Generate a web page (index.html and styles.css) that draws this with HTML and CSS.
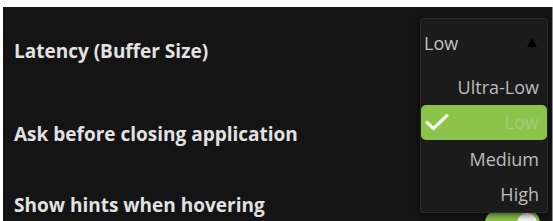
FILE: index.html
```html
<!DOCTYPE html>
<html lang="en">
  <head>
    <meta charset="UTF-8" />
    <meta name="viewport" content="width=device-width, initial-scale=1.0" />
    <title>Settings</title>
    <link rel="stylesheet" href="styles.css">
  </head>
  <body>
    <div class="window">
      <div class="settings">
        <div class="row row-latency">
          <span class="label">Latency (Buffer Size)</span>
        </div>
        <div class="row row-ask">
          <span class="label">Ask before closing application</span>
        </div>
        <div class="row row-hints">
          <span class="label">Show hints when hovering</span>
          <span class="toggle"><span class="knob"></span></span>
        </div>
      </div>

      <!-- open dropdown for latency -->
      <div class="menu">
        <div class="menu-head">
          <span class="current">Low</span>
          <span class="arrow"></span>
        </div>
        <div class="item">Ultra-Low</div>
        <div class="item selected">
          <svg class="check" width="24" height="18" viewBox="0 0 24 18">
            <path d="M2 9.5 L8.5 15.5 L22 2.5" fill="none" stroke="#f2f6ea" stroke-width="3.2" stroke-linecap="round" stroke-linejoin="round" />
          </svg>
          <span>Low</span>
        </div>
        <div class="item">Medium</div>
        <div class="item">High</div>
      </div>
    </div>
  </body>
</html>
```

FILE: styles.css
```css
body {
  margin: 0;
  background: #ffffff;
  font-family: "Open Sans", "DejaVu Sans", sans-serif;
}

.window {
  position: relative;
  margin: 7px 0 0 3px;
  width: 549px;
  height: 214px;
  background: #141414;
  border-right: 1px solid #8a8a8a;
  overflow: hidden;
}

.settings {
  display: flex;
  flex-direction: column;
  padding: 31px 12px 0 11px;
}

.row {
  display: flex;
  justify-content: space-between;
  align-items: flex-start;
}

.row-latency {
  height: 83px;
}

.row-ask {
  height: 71px;
}

.label {
  font-size: 19px;
  line-height: 26px;
  font-weight: 700;
  color: #e2e2e2;
}

.toggle {
  display: flex;
  justify-content: flex-end;
  align-items: center;
  width: 55px;
  height: 26px;
  margin-top: 18px;
  padding-right: 3px;
  box-sizing: border-box;
  border-radius: 13px;
  background: #8cc34b;
}

.knob {
  width: 20px;
  height: 20px;
  border-radius: 50%;
  background: #f4f4f4;
}

.menu {
  position: absolute;
  left: 417px;
  top: 11px;
  width: 126px;
  height: 193px;
  display: flex;
  flex-direction: column;
  background: #1b1b1b;
  border: 1px solid #292929;
  border-radius: 3px;
  box-shadow: 0 2px 6px rgba(0, 0, 0, 0.6);
  font-size: 18px;
  line-height: 26px;
}

.menu-head {
  display: flex;
  justify-content: space-between;
  align-items: center;
  height: 51px;
  padding: 0 10px 3px 3px;
  box-sizing: border-box;
}

.current {
  color: #c4c4c4;
}

.arrow {
  width: 0;
  height: 0;
  border-left: 5px solid transparent;
  border-right: 5px solid transparent;
  border-bottom: 9px solid #000000;
}

.item {
  display: flex;
  justify-content: flex-end;
  align-items: center;
  height: 36px;
  padding-right: 8px;
  color: #bcbcbc;
}

.item.selected {
  justify-content: space-between;
  height: 35px;
  margin-bottom: 1px;
  padding-left: 4px;
  border-radius: 5px;
  background: #8cc34b;
  color: #a7c982;
}
```
